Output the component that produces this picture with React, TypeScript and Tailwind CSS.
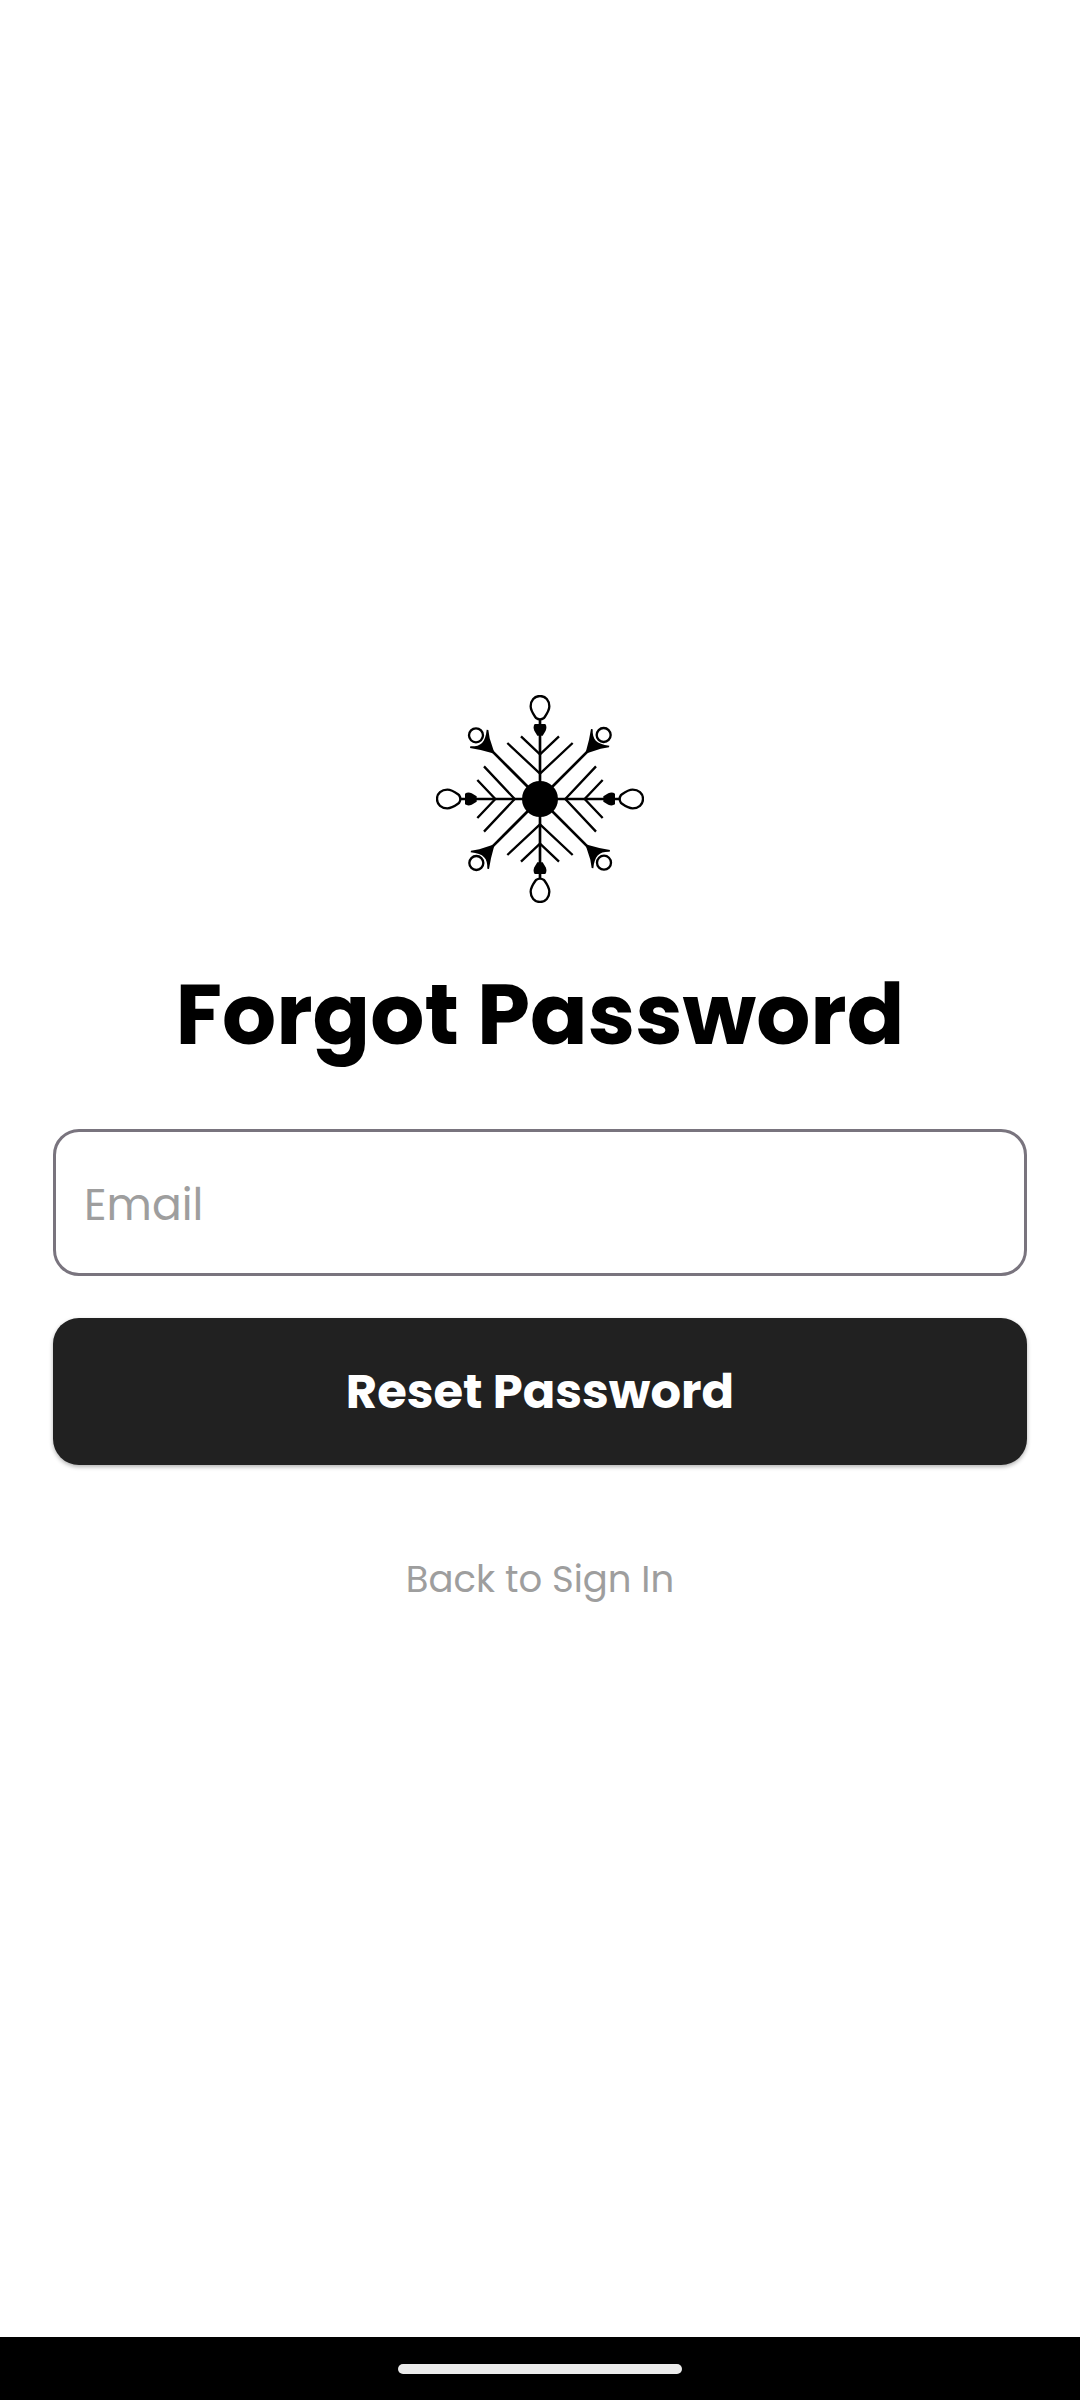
function Arm({ angle }: { angle: number }) {
  return (
    <g transform={`rotate(${angle})`}>
      <path d="M0 0V-240" strokeWidth="8" />
      <path d="M-57 -188L0 -134L57 -188M-98 -168L0 -76L98 -168" strokeWidth="7" />
      <path d="M-16 -225H16Q22 -216 17 -205L8 -190H-8L-17 -205Q-22 -216 -16 -225Z" fill="black" stroke="none" />
      <path d="M0 -309C17 -309 28 -295 28 -278C28 -264 19 -253 12 -243Q6 -239 0 -239Q-6 -239 -12 -243C-19 -253 -28 -264 -28 -278C-28 -295 -17 -309 0 -309Z" fill="white" strokeWidth="7" />
    </g>
  );
}

function Diagonal({ angle }: { angle: number }) {
  return (
    <g transform={`rotate(${angle})`}>
      <path d="M0 0L145 -145" strokeWidth="8" />
      <path d="M153 -210L158 -209C157 -179 168 -164 208 -160L207 -155L182 -151L136 -136L147 -178Z" fill="black" stroke="none" />
      <circle cx="191" cy="-192" r="21" strokeWidth="7" />
    </g>
  );
}

function Snowflake() {
  return (
    <svg
      viewBox="-312 -312 624 624"
      className="size-52"
      fill="none"
      stroke="black"
      role="img"
      aria-label="Snowflake logo"
    >
      {[0, 90, 180, 270].map((angle) => (
        <Diagonal key={angle} angle={angle} />
      ))}
      {[0, 90, 180, 270].map((angle) => (
        <Arm key={angle} angle={angle} />
      ))}
      <circle r="54" fill="black" stroke="none" />
    </svg>
  );
}

export default function App() {
  return (
    <div className="flex min-h-screen flex-col bg-white font-[Poppins,Inter,sans-serif]">
      <main className="flex grow flex-col items-center justify-center px-[53px] pb-[33px]">
        <Snowflake />
        <h1 className="mt-12 text-center text-[85px] leading-[128px] font-bold text-black">Forgot Password</h1>
        <form className="mt-[50px] flex w-full flex-col" onSubmit={(e) => e.preventDefault()}>
          <input
            type="email"
            aria-label="Email"
            placeholder="Email"
            className="h-[147px] w-full rounded-[26px] border-3 border-[#79747e] bg-white px-7 pt-1 text-[44px] text-black outline-none placeholder:text-[#9e9e9e]"
          />
          <button
            type="submit"
            className="mt-[42px] h-[147px] w-full rounded-[26px] bg-[#212121] text-[48px] font-bold text-white shadow-[0_2px_4px_rgba(0,0,0,0.3)]"
          >
            Reset Password
          </button>
        </form>
        <a href="#sign-in" className="mt-[84px] text-[37px] leading-[60px] text-[#9e9e9e]">
          Back to Sign In
        </a>
      </main>
      <footer className="flex h-[63px] items-center justify-center bg-black">
        <div className="h-[10px] w-[284px] rounded-full bg-[#ebebeb]" />
      </footer>
    </div>
  );
}
